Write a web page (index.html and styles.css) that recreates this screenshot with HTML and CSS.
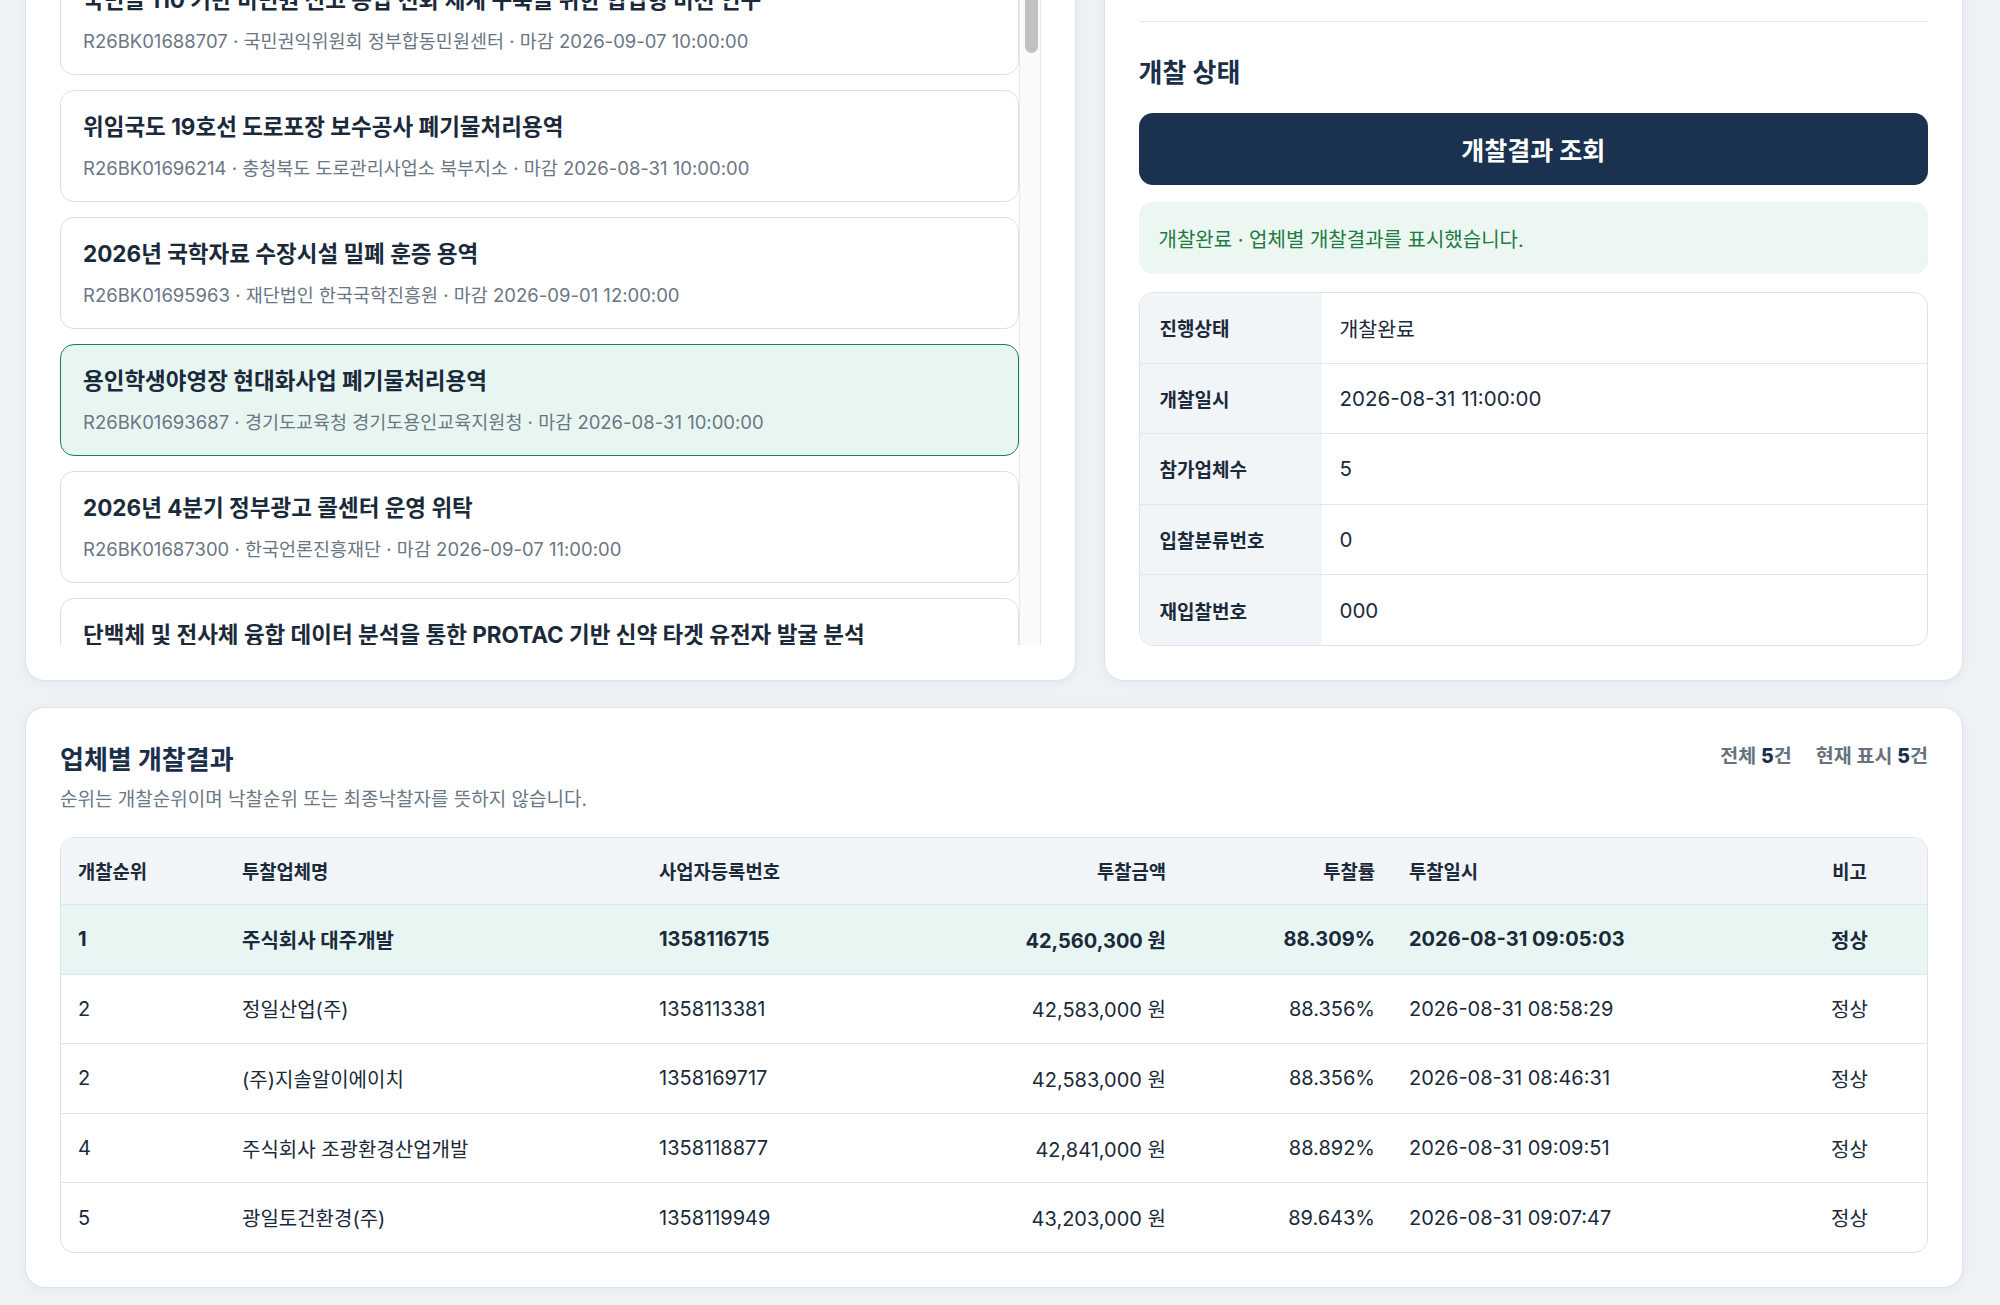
FILE: index.html
```html
<!DOCTYPE html>
<html lang="ko">
<head>
    <meta charset="UTF-8">
    <meta name="viewport" content="width=device-width, initial-scale=1.0">
    <title>입찰 개찰결과 조회</title>
    <link rel="stylesheet" href="styles.css">
</head>
<body>

<div class="page">
    <div class="top-grid">
        <section class="panel">
            <h2 class="panel-title">입찰공고 목록</h2>
            <div class="list-wrap">
                <div id="noticeList" class="notice-list"></div>
                <div class="scroll-rail"><div class="scroll-thumb"></div></div>
            </div>
        </section>

        <section class="panel">
            <div class="detail">
                <h2 class="panel-title">공고 상세</h2>
                <div class="detail-grid">
                    <div class="detail-row"><span>공고번호</span><span>R26BK01693687</span></div>
                    <div class="detail-row"><span>공고명</span><span>용인학생야영장 현대화사업 폐기물처리용역</span></div>
                    <div class="detail-row"><span>공고기관</span><span>경기도교육청</span></div>
                    <div class="detail-row"><span>수요기관</span><span>경기도용인교육지원청</span></div>
                    <div class="detail-row"><span>계약방법</span><span>제한경쟁</span></div>
                    <div class="detail-row"><span>입찰마감</span><span>2026-08-31 10:00:00</span></div>
                    <div class="detail-row"><span>개찰일시</span><span>2026-08-31 11:00:00</span></div>
                </div>
            </div>

            <h2 class="panel-title status-title">개찰 상태</h2>
            <button class="primary-button" type="button">개찰결과 조회</button>
            <div class="notice-ok">개찰완료 · 업체별 개찰결과를 표시했습니다.</div>

            <div class="info-table">
                <div class="info-row"><div class="info-label">진행상태</div><div class="info-value">개찰완료</div></div>
                <div class="info-row"><div class="info-label">개찰일시</div><div class="info-value">2026-08-31 11:00:00</div></div>
                <div class="info-row"><div class="info-label">참가업체수</div><div class="info-value">5</div></div>
                <div class="info-row"><div class="info-label">입찰분류번호</div><div class="info-value">0</div></div>
                <div class="info-row"><div class="info-label">재입찰번호</div><div class="info-value">000</div></div>
            </div>
        </section>
    </div>

    <section class="panel result-panel">
        <div class="result-head">
            <div>
                <h2 class="panel-title">업체별 개찰결과</h2>
                <p class="result-sub">순위는 개찰순위이며 낙찰순위 또는 최종낙찰자를 뜻하지 않습니다.</p>
            </div>
            <div class="result-count">
                <span>전체 <b>5</b>건</span>
                <span>현재 표시 <b>5</b>건</span>
            </div>
        </div>

        <div class="table-wrap">
            <table class="result-table">
                <colgroup>
                    <col class="c-rank"><col class="c-name"><col class="c-biz"><col class="c-amount">
                    <col class="c-rate"><col class="c-date"><col class="c-note">
                </colgroup>
                <thead>
                    <tr>
                        <th>개찰순위</th>
                        <th>투찰업체명</th>
                        <th>사업자등록번호</th>
                        <th class="num">투찰금액</th>
                        <th class="num">투찰률</th>
                        <th>투찰일시</th>
                        <th class="center">비고</th>
                    </tr>
                </thead>
                <tbody>
                    <tr class="top-row">
                        <td>1</td>
                        <td>주식회사 대주개발</td>
                        <td>1358116715</td>
                        <td class="num">42,560,300 원</td>
                        <td class="num">88.309%</td>
                        <td>2026-08-31 09:05:03</td>
                        <td class="center">정상</td>
                    </tr>
                    <tr>
                        <td>2</td>
                        <td>정일산업(주)</td>
                        <td>1358113381</td>
                        <td class="num">42,583,000 원</td>
                        <td class="num">88.356%</td>
                        <td>2026-08-31 08:58:29</td>
                        <td class="center">정상</td>
                    </tr>
                    <tr>
                        <td>2</td>
                        <td>(주)지솔알이에이치</td>
                        <td>1358169717</td>
                        <td class="num">42,583,000 원</td>
                        <td class="num">88.356%</td>
                        <td>2026-08-31 08:46:31</td>
                        <td class="center">정상</td>
                    </tr>
                    <tr>
                        <td>4</td>
                        <td>주식회사 조광환경산업개발</td>
                        <td>1358118877</td>
                        <td class="num">42,841,000 원</td>
                        <td class="num">88.892%</td>
                        <td>2026-08-31 09:09:51</td>
                        <td class="center">정상</td>
                    </tr>
                    <tr>
                        <td>5</td>
                        <td>광일토건환경(주)</td>
                        <td>1358119949</td>
                        <td class="num">43,203,000 원</td>
                        <td class="num">89.643%</td>
                        <td>2026-08-31 09:07:47</td>
                        <td class="center">정상</td>
                    </tr>
                </tbody>
            </table>
        </div>
    </section>
</div>

<script>
    const notices = [
        ['R26BK01699120', '2026년 하반기 청사 시설물 유지관리 용역', '행정안전부 정부청사관리본부', '2026-09-10 10:00:00'],
        ['R26BK01698455', '공공도서관 통합 전산시스템 유지보수', '서울특별시교육청 정독도서관', '2026-09-08 14:00:00'],
        ['R26BK01697731', '하천 수질 자동측정망 운영 관리 용역', '한국환경공단', '2026-09-04 11:00:00'],
        ['R26BK01688707', '국민콜 110 기반 비민원 신고 응답 전화 체계 구축을 위한 협업형 비전 연구', '국민권익위원회 정부합동민원센터', '2026-09-07 10:00:00'],
        ['R26BK01696214', '위임국도 19호선 도로포장 보수공사 폐기물처리용역', '충청북도 도로관리사업소 북부지소', '2026-08-31 10:00:00'],
        ['R26BK01695963', '2026년 국학자료 수장시설 밀폐 훈증 용역', '재단법인 한국국학진흥원', '2026-09-01 12:00:00'],
        ['R26BK01693687', '용인학생야영장 현대화사업 폐기물처리용역', '경기도교육청 경기도용인교육지원청', '2026-08-31 10:00:00'],
        ['R26BK01687300', '2026년 4분기 정부광고 콜센터 운영 위탁', '한국언론진흥재단', '2026-09-07 11:00:00'],
        ['R26BK01686512', '단백체 및 전사체 융합 데이터 분석을 통한 PROTAC 기반 신약 타겟 유전자 발굴 분석', '한국생명공학연구원', '2026-09-03 15:00:00'],
        ['R26BK01685904', '시립체육관 냉난방설비 정기점검 용역', '수원시 시설관리공단', '2026-09-02 10:00:00'],
        ['R26BK01685177', '농촌지역 공공하수처리시설 운영 위탁', '충청남도 공주시', '2026-09-05 10:00:00'],
        ['R26BK01684330', '학교급식 식재료 안전성 검사 용역', '경상북도교육청', '2026-09-06 11:00:00'],
        ['R26BK01683862', '국가지점번호판 정비 및 위치 조사 용역', '전라남도 순천시', '2026-09-09 10:00:00'],
        ['R26BK01683015', '항만 보안시설 CCTV 교체 공사', '부산항만공사', '2026-09-11 14:00:00'],
        ['R26BK01682247', '산림병해충 방제 항공 예찰 용역', '산림청 북부지방산림청', '2026-09-12 10:00:00'],
        ['R26BK01681590', '공영주차장 무인정산시스템 구축', '대전광역시 서구', '2026-09-14 11:00:00'],
        ['R26BK01680836', '전통시장 화재알림설비 유지관리', '소상공인시장진흥공단', '2026-09-15 10:00:00'],
        ['R26BK01680114', '지역아동센터 급식환경 개선 컨설팅', '강원특별자치도 원주시', '2026-09-16 10:00:00'],
        ['R26BK01679452', '하수관로 정밀조사 및 기술진단 용역', '경기도 화성시', '2026-09-17 10:00:00']
    ];
    const selectedId = 'R26BK01693687';

    const list = document.getElementById('noticeList');
    notices.forEach(n => {
        const item = document.createElement('div');
        item.className = 'notice-item' + (n[0] === selectedId ? ' selected' : '');
        const title = document.createElement('div');
        title.className = 'notice-title';
        title.innerText = n[1];
        const meta = document.createElement('div');
        meta.className = 'notice-meta';
        meta.innerText = `${n[0]} · ${n[2]} · 마감 ${n[3]}`;
        item.appendChild(title);
        item.appendChild(meta);
        list.appendChild(item);
    });

    // keep the view where the results table is in sight
    window.scrollTo(0, 532);
</script>

</body>
</html>
```

FILE: styles.css
```css
html {
    scrollbar-width: none;
}
body {
    margin: 0;
    padding: 25px 0;
    background: #eef2f5;
    color: #1b2a3a;
    font-family: Inter, "Noto Sans CJK KR", sans-serif;
    font-size: 19px;
}
.page {
    width: 1938px;
    margin-left: 25px;
}
.top-grid {
    display: grid;
    grid-template-columns: 11fr 9fr;
    gap: 28px;
}
.panel {
    background: #fff;
    border: 1px solid #dde3ea;
    border-radius: 20px;
    padding: 34px;
    box-shadow: 0 2px 10px rgba(20, 40, 70, 0.05);
}
.panel-title {
    margin: 0 0 18px;
    font-size: 26px;
    line-height: 36px;
    font-weight: 700;
    color: #1b2f4a;
}

/* notice list */
.list-wrap {
    position: relative;
}
.notice-list {
    height: 1063px;
    overflow-y: auto;
    scrollbar-width: none;
    padding-right: 22px;
    display: flex;
    flex-direction: column;
    gap: 15px;
}
.scroll-rail {
    position: absolute;
    top: 0;
    right: 0;
    bottom: 0;
    width: 22px;
    box-sizing: border-box;
    background: #fafafa;
    border-left: 1px solid #e9e9e9;
    border-right: 1px solid #e9e9e9;
}
.scroll-thumb {
    position: absolute;
    top: 0;
    left: 5px;
    width: 13px;
    height: 471px;
    border-radius: 7px;
    background: #c1c1c1;
}
.notice-item {
    flex-shrink: 0;
    border: 1px solid #d9e0e8;
    border-radius: 14px;
    padding: 20px 22px;
    background: #fff;
}
.notice-item.selected {
    background: #e8f6f2;
    border-color: #177c6c;
}
.notice-title {
    font-size: 22.5px;
    line-height: 31.5px;
    font-weight: 700;
    color: #1b2a3a;
    white-space: nowrap;
    overflow: hidden;
    text-overflow: ellipsis;
}
.notice-meta {
    margin-top: 12.5px;
    font-size: 18.5px;
    line-height: 26px;
    color: #6b7684;
    white-space: nowrap;
    overflow: hidden;
    text-overflow: ellipsis;
}

/* right panel */
.detail {
    padding-bottom: 47px;
    border-bottom: 1px solid #e2e7ed;
}
.detail-row {
    display: grid;
    grid-template-columns: 182px 1fr;
    height: 56px;
    align-items: center;
}
.detail-row span:first-child {
    font-weight: 700;
}
.status-title {
    margin: 33px 0 22px;
}
.primary-button {
    display: block;
    width: 100%;
    height: 72px;
    border: none;
    border-radius: 14px;
    background: #1a3250;
    color: #fff;
    font-family: inherit;
    font-size: 25px;
    font-weight: 700;
    cursor: pointer;
}
.notice-ok {
    margin-top: 17px;
    height: 72px;
    box-sizing: border-box;
    padding: 0 20px;
    display: flex;
    align-items: center;
    border-radius: 14px;
    background: #edf7f1;
    color: #1f7a45;
    font-size: 20px;
}
.info-table {
    margin-top: 18px;
    border: 1px solid #dde3ea;
    border-radius: 14px;
    overflow: hidden;
}
.info-row {
    display: grid;
    grid-template-columns: 182px 1fr;
    height: 69.6px;
    border-bottom: 1px solid #e0e6ec;
}
.info-row:last-child {
    border-bottom: none;
}
.info-label {
    display: flex;
    align-items: center;
    padding-left: 20px;
    background: #f2f5f8;
    font-size: 19px;
    font-weight: 700;
}
.info-value {
    display: flex;
    align-items: center;
    padding-left: 18px;
    font-size: 20.5px;
}

/* result table */
.result-panel {
    margin-top: 26px;
}
.result-head {
    display: flex;
    justify-content: space-between;
    align-items: flex-start;
}
.result-head .panel-title {
    margin: 0;
}
.result-sub {
    margin: 8px 0 0;
    font-size: 19px;
    line-height: 27px;
    color: #6b7785;
}
.result-count {
    display: flex;
    gap: 24px;
    font-size: 19.5px;
    line-height: 28px;
    font-weight: 600;
    color: #66727f;
}
.result-count b {
    color: #1b2f4a;
    font-weight: 800;
}
.table-wrap {
    margin-top: 24px;
    border: 1px solid #dde3ea;
    border-radius: 14px;
    overflow: hidden;
}
.result-table {
    width: 100%;
    border-collapse: collapse;
    table-layout: fixed;
}
.c-rank { width: 164px; }
.c-name { width: 417px; }
.c-biz { width: 300px; }
.c-amount { width: 241px; }
.c-rate { width: 209px; }
.c-date { width: 378px; }
.c-note { width: 159px; }
.result-table th, .result-table td {
    padding: 0 17px;
    text-align: left;
    white-space: nowrap;
    border-bottom: 1px solid #dfe5ec;
}
.result-table th {
    height: 66px;
    background: #f2f5f8;
    font-size: 18.8px;
    font-weight: 700;
}
.result-table td {
    height: 68.6px;
    font-size: 20px;
}
.result-table tbody tr:last-child td {
    border-bottom: none;
}
.result-table .num {
    text-align: right;
}
.result-table .center {
    text-align: center;
}
.top-row td {
    background: #e8f6f3;
    font-weight: 700;
}
```
